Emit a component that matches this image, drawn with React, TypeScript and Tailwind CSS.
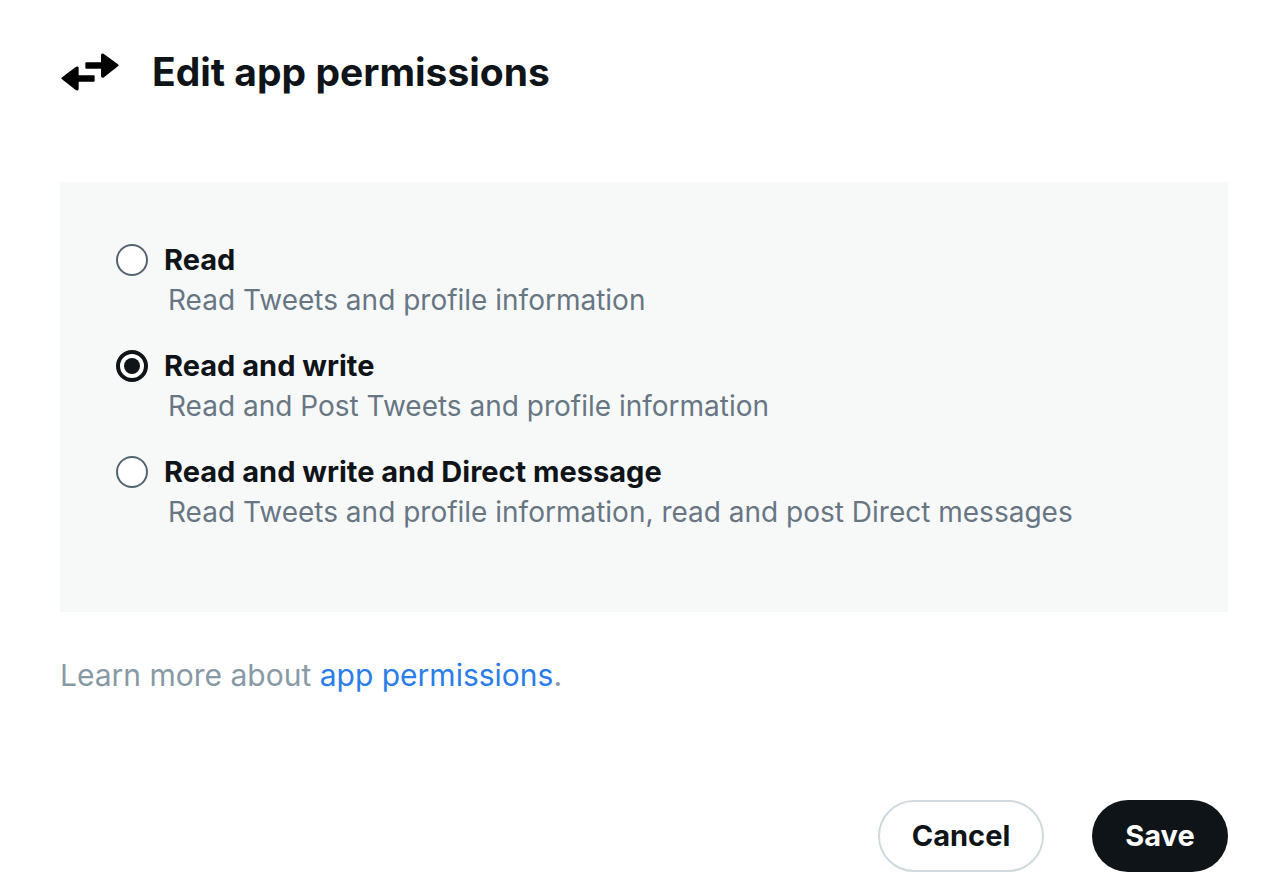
import { useState } from 'react';

const options = [
  {
    id: 'read',
    label: 'Read',
    description: 'Read Tweets and profile information',
  },
  {
    id: 'read-write',
    label: 'Read and write',
    description: 'Read and Post Tweets and profile information',
  },
  {
    id: 'read-write-dm',
    label: 'Read and write and Direct message',
    description: 'Read Tweets and profile information, read and post Direct messages',
  },
];

function ArrowsIcon() {
  return (
    <svg
      className="h-10 w-15 shrink-0"
      viewBox="0 0 180 120"
      fill="#000"
      stroke="#000"
      strokeWidth="6"
      strokeLinejoin="round"
      aria-hidden="true"
    >
      <path d="M79 34H126V10Q126 6 131 9L173 40L131 73Q126 76 126 71V47H79Z" />
      <path d="M101 73H53V49Q53 44 48 48L7 79L48 111Q53 115 53 110V86H101Z" />
    </svg>
  );
}

export default function App() {
  const [selected, setSelected] = useState('read-write');

  return (
    <main className="bg-white px-15 pt-12 pb-5 font-['Inter','Liberation_Sans',sans-serif] text-[#0f1419]">
      <header className="flex h-12 items-center gap-8">
        <ArrowsIcon />
        <h1 className="text-[39px] leading-12 font-bold">Edit app permissions</h1>
      </header>

      <form className="mt-[86px]" onSubmit={(event) => event.preventDefault()}>
        <fieldset
          aria-label="App permissions"
          className="flex flex-col gap-6.5 bg-[#f7f9f9] px-14 pt-[58px] pb-20"
        >
          {options.map((option) => (
            <div key={option.id} className="flex items-start gap-4">
              <input
                type="radio"
                id={option.id}
                name="permission"
                value={option.id}
                checked={selected === option.id}
                onChange={() => setSelected(option.id)}
                aria-describedby={`${option.id}-description`}
                className="mt-1 flex size-8 shrink-0 appearance-none items-center justify-center rounded-full border-2 border-[#536471] bg-white checked:border-4 checked:border-[#0f1419] checked:before:size-4 checked:before:rounded-full checked:before:bg-[#0f1419] checked:before:content-['']"
              />
              <div>
                <label htmlFor={option.id} className="block text-[29px] leading-10 font-bold">
                  {option.label}
                </label>
                <p
                  id={`${option.id}-description`}
                  className="pl-1 text-[28px] leading-10 text-[#687684]"
                >
                  {option.description}
                </p>
              </div>
            </div>
          ))}
        </fieldset>

        <p className="mt-10 text-[30px] leading-[46px] text-[#8899a6]">
          Learn more about{' '}
          <a href="#app-permissions" className="text-[#2b7de9]">
            app permissions
          </a>
          .
        </p>

        <div className="mt-[102px] flex justify-end gap-12">
          <button
            type="button"
            className="h-18 w-[166px] rounded-full border-2 border-[#cfd9de] bg-white text-[29px] font-bold"
          >
            Cancel
          </button>
          <button
            type="submit"
            className="h-18 w-[136px] rounded-full bg-[#0f1419] text-[29px] font-bold text-white"
          >
            Save
          </button>
        </div>
      </form>
    </main>
  );
}
